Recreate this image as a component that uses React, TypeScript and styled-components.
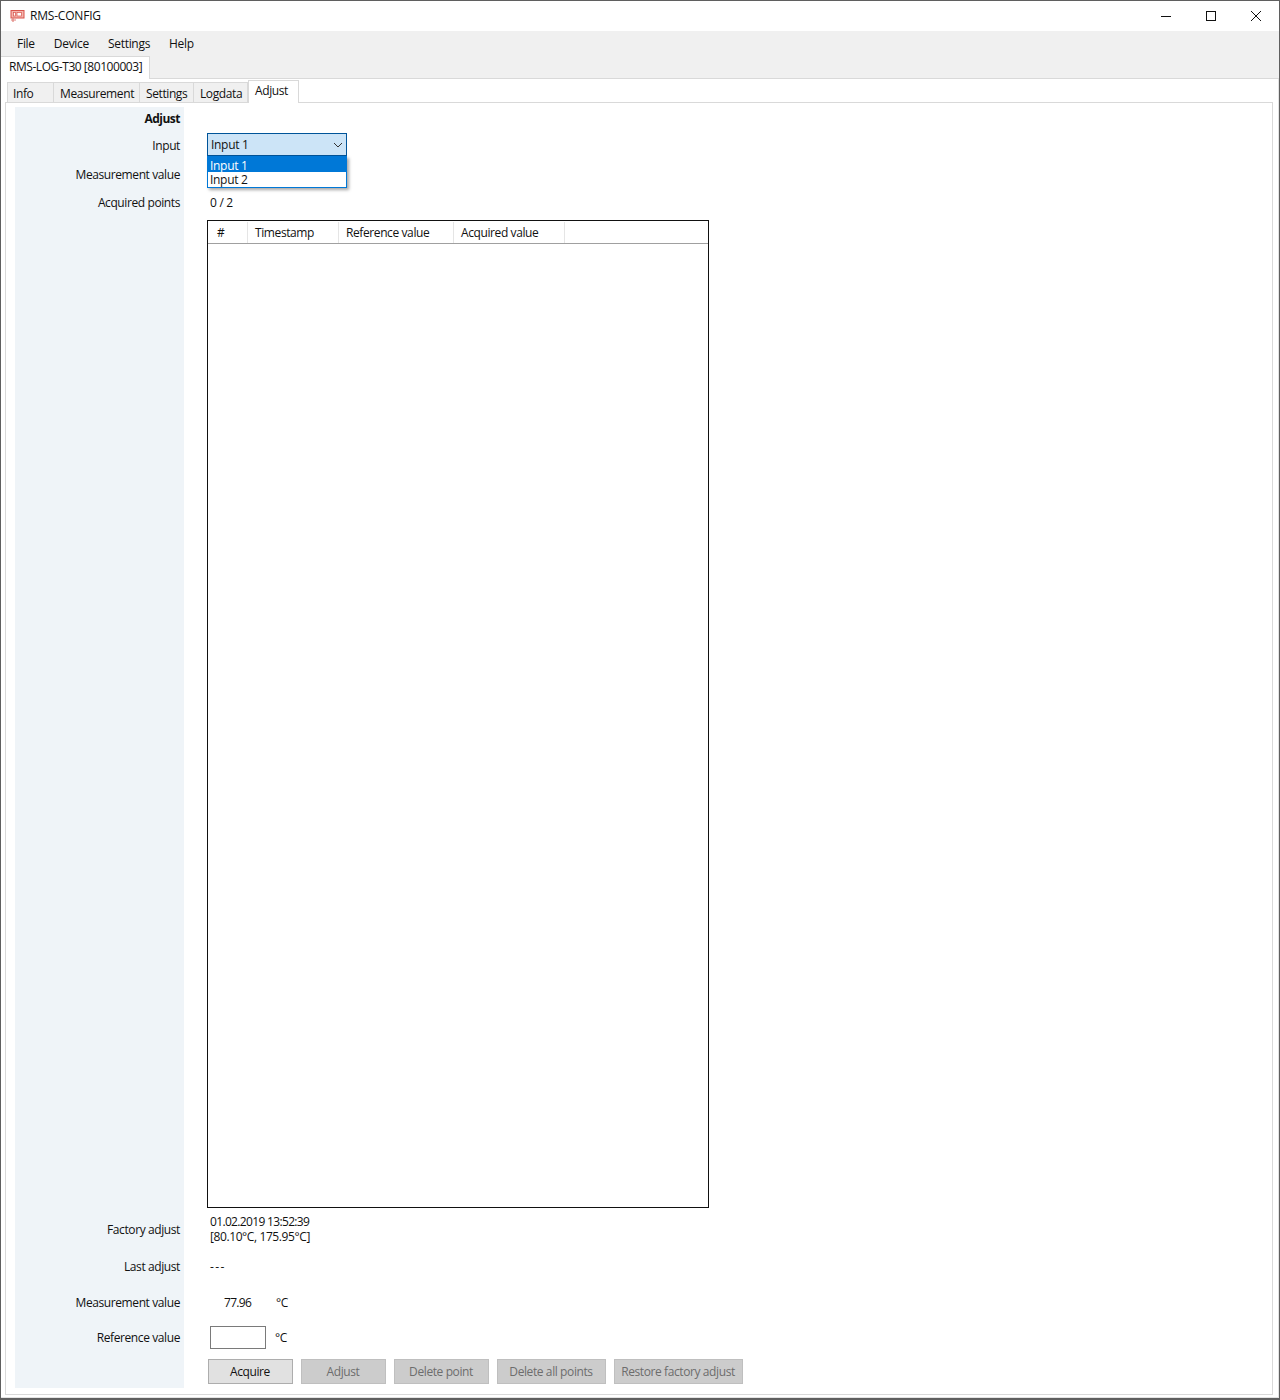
import React from "react";
import styled, { createGlobalStyle } from "styled-components";

const GlobalStyle = createGlobalStyle`
  html, body { margin: 0; padding: 0; background: #fff; }
  body { font-family: "Open Sans", "Noto Sans", "Liberation Sans", sans-serif; font-size: 12px; color: #111; }
`;

const Window = styled.div`
  width: 1280px;
  height: 1400px;
  box-sizing: border-box;
  border: 1px solid #5f5f5f;
  border-bottom-width: 2px;
  display: flex;
  flex-direction: column;
  background: #fff;
  overflow: hidden;
`;

const TitleBar = styled.div`
  height: 30px;
  flex: none;
  display: flex;
  align-items: center;
  padding-left: 9px;
`;

const AppTitle = styled.span`
  flex: 1;
  margin: -2px 0 0 5px;
  letter-spacing: -0.2px;
`;

const WinButton = styled.div<{ $wide?: boolean }>`
  width: ${(p) => (p.$wide ? 46 : 45)}px;
  height: 30px;
  display: flex;
  align-items: center;
  justify-content: center;
`;

const MenuBar = styled.div`
  height: 25px;
  flex: none;
  background: #f0f0f0;
  display: flex;
  align-items: center;
  padding-left: 16px;
  gap: 19px;
`;

const MenuItem = styled.span`
  letter-spacing: -0.3px;
`;

const DocStrip = styled.div`
  height: 22px;
  flex: none;
  background: #f0f0f0;
  border-bottom: 1px solid #d9d9d9;
  display: flex;
`;

const DocTab = styled.div`
  width: 149px;
  height: 23px;
  box-sizing: border-box;
  background: #fff;
  border: 1px solid #d9d9d9;
  border-bottom: none;
  border-left: none;
  padding-left: 8px;
  line-height: 20px;
  letter-spacing: -0.45px;
  white-space: nowrap;
`;

const DocPanel = styled.div`
  flex: 1;
  min-height: 0;
  display: flex;
  flex-direction: column;
  padding: 1px 5px 2px 4px;
  border-right: 1px solid #e3e3e3;
  border-bottom: 1px solid #e3e3e3;
`;

const TabStrip = styled.div`
  height: 22px;
  flex: none;
  display: flex;
  align-items: flex-end;
  padding-left: 2px;
`;

const Tab = styled.div<{ $width: number; $active?: boolean }>`
  width: ${(p) => p.$width}px;
  height: ${(p) => (p.$active ? 23 : 20)}px;
  box-sizing: border-box;
  padding: ${(p) => (p.$active ? "1px 0 0 6px" : "2px 0 0 6px")};
  line-height: 17px;
  letter-spacing: -0.4px;
  white-space: nowrap;
  background: ${(p) => (p.$active ? "#fff" : "#f0f0f0")};
  border: 1px solid #d9d9d9;
  border-left-width: ${(p) => (p.$active ? 1 : 0)}px;
  border-bottom: none;
  position: relative;
  z-index: ${(p) => (p.$active ? 1 : 0)};
  margin-bottom: ${(p) => (p.$active ? -1 : 0)}px;
  &:first-child {
    border-left-width: 1px;
    padding-left: 5px;
  }
`;

const TabPanel = styled.div`
  flex: 1;
  min-height: 0;
  border: 1px solid #d9d9d9;
  padding: 4px 0 6px 9px;
  display: flex;
`;

const Form = styled.div`
  flex: 1;
  display: grid;
  grid-template-columns: 169px 1fr;
  grid-template-rows: 22px 32px 27px 29px 994px 37px 37px 35px 34px 1fr;
`;

const Label = styled.div<{ $bold?: boolean }>`
  background: #eff4f8;
  display: flex;
  align-items: center;
  justify-content: flex-end;
  padding-right: 4px;
  font-weight: ${(p) => (p.$bold ? 700 : 400)};
  letter-spacing: ${(p) => (p.$bold ? "-0.5px" : "-0.4px")};
  white-space: nowrap;
`;

const Cell = styled.div`
  display: flex;
  align-items: center;
  padding-left: 26px;
  letter-spacing: -0.3px;
  position: relative;
`;

const ComboCell = styled(Cell)`
  padding: 4px 0 0 23px;
  align-items: flex-start;
`;

const Combo = styled.div`
  width: 140px;
  height: 23px;
  box-sizing: border-box;
  background: #cce4f7;
  border: 1px solid #005499;
  display: flex;
  align-items: center;
  justify-content: space-between;
  padding: 0 3px 0 3px;
`;

const DropList = styled.div`
  position: absolute;
  left: 23px;
  top: 27px;
  width: 140px;
  height: 32px;
  box-sizing: border-box;
  background: #fff;
  border: 1px solid #0078d7;
  box-shadow: 2px 2px 3px rgba(0, 0, 0, 0.35);
  z-index: 2;
`;

const DropItem = styled.div<{ $selected?: boolean }>`
  height: 15px;
  box-sizing: border-box;
  padding: ${(p) => (p.$selected ? "2px 0 0 2px" : "1px 0 0 2px")};
  line-height: 13px;
  background: ${(p) => (p.$selected ? "#0078d7" : "#fff")};
  color: ${(p) => (p.$selected ? "#fff" : "#111")};
`;

const TableCell = styled.div`
  padding: 3px 0 3px 23px;
  display: flex;
`;

const Table = styled.div`
  width: 502px;
  box-sizing: border-box;
  border: 1px solid #111;
  padding-top: 1px;
`;

const TableHead = styled.div`
  height: 22px;
  box-sizing: border-box;
  border-bottom: 1px solid #a0a0a0;
  display: flex;
`;

const HeadCol = styled.div<{ $width: number }>`
  width: ${(p) => p.$width}px;
  box-sizing: border-box;
  padding-left: 7px;
  line-height: 22px;
  border-right: 1px solid #e5e5e5;
  letter-spacing: -0.4px;
  white-space: nowrap;
  &:first-child {
    padding-left: 9px;
  }
`;

const TwoLines = styled.div`
  line-height: 15px;
  letter-spacing: -0.4px;
  margin-top: -2px;
`;

const DateLine = styled.span`
  letter-spacing: -0.66px;
`;

const Dashes = styled.span`
  letter-spacing: 1.4px;
`;

const Value = styled.span`
  width: 66px;
  padding-left: 14px;
  box-sizing: border-box;
  letter-spacing: -0.7px;
`;

const ValueInput = styled.input`
  width: 56px;
  height: 23px;
  box-sizing: border-box;
  border: 1px solid #7a7a7a;
  background: #fff;
  margin-right: 9px;
  padding: 0;
`;

const ButtonRow = styled.div`
  display: flex;
  gap: 8px;
  padding: 5px 0 0 24px;
  align-items: flex-start;
`;

const Button = styled.button<{ $width: number }>`
  width: ${(p) => p.$width}px;
  height: 25px;
  box-sizing: border-box;
  padding: 0 1px 0 0;
  font: inherit;
  letter-spacing: -0.4px;
  white-space: nowrap;
  color: ${(p) => (p.disabled ? "#6d6d6d" : "#111")};
  background: ${(p) => (p.disabled ? "#cccccc" : "#e1e1e1")};
  border: 1px solid ${(p) => (p.disabled ? "#bfbfbf" : "#adadad")};
`;

function AppIcon() {
  return (
    <svg width="15" height="14" viewBox="0 0 15 14" fill="none">
      <rect x="1" y="1.5" width="13" height="7.5" fill="#f3b5ae" stroke="#d9534a" />
      <rect x="3.5" y="3.5" width="2" height="3.5" fill="#fff" stroke="#d9534a" strokeWidth="0.7" />
      <rect x="7" y="3.5" width="4.5" height="3.5" fill="#fff" stroke="#d9534a" strokeWidth="0.7" />
      <path d="M1 11h5M3 9v4" stroke="#e0807a" strokeWidth="1.2" />
    </svg>
  );
}

const columns = [
  { label: "#", width: 40 },
  { label: "Timestamp", width: 91 },
  { label: "Reference value", width: 115 },
  { label: "Acquired value", width: 111 },
];

const tabs = [
  { label: "Info", width: 47 },
  { label: "Measurement", width: 86 },
  { label: "Settings", width: 54 },
  { label: "Logdata", width: 54 },
];

export default function App() {
  return (
    <Window>
      <GlobalStyle />
      <TitleBar>
        <AppIcon />
        <AppTitle>RMS-CONFIG</AppTitle>
        <WinButton>
          <svg width="10" height="10" viewBox="0 0 10 10">
            <path d="M0 5.5h10" stroke="#111" />
          </svg>
        </WinButton>
        <WinButton>
          <svg width="10" height="10" viewBox="0 0 10 10">
            <rect x="0.5" y="0.5" width="9" height="9" fill="none" stroke="#111" />
          </svg>
        </WinButton>
        <WinButton $wide>
          <svg width="10" height="10" viewBox="0 0 10 10">
            <path d="M0 0l10 10M10 0L0 10" stroke="#111" />
          </svg>
        </WinButton>
      </TitleBar>
      <MenuBar>
        <MenuItem>File</MenuItem>
        <MenuItem>Device</MenuItem>
        <MenuItem>Settings</MenuItem>
        <MenuItem>Help</MenuItem>
      </MenuBar>
      <DocStrip>
        <DocTab>RMS-LOG-T30 [80100003]</DocTab>
      </DocStrip>
      <DocPanel>
        <TabStrip>
          {tabs.map((t) => (
            <Tab key={t.label} $width={t.width}>
              {t.label}
            </Tab>
          ))}
          <Tab $width={51} $active>
            Adjust
          </Tab>
        </TabStrip>
        <TabPanel>
          <Form>
            <Label $bold>Adjust</Label>
            <Cell />
            <Label>Input</Label>
            <ComboCell>
              <Combo>
                Input 1
                <svg width="10" height="6" viewBox="0 0 10 6">
                  <path d="M1 1l4 4 4-4" fill="none" stroke="#333" />
                </svg>
              </Combo>
              <DropList>
                <DropItem $selected>Input 1</DropItem>
                <DropItem>Input 2</DropItem>
              </DropList>
            </ComboCell>
            <Label>Measurement value</Label>
            <Cell />
            <Label>Acquired points</Label>
            <Cell>0 / 2</Cell>
            <Label />
            <TableCell>
              <Table>
                <TableHead>
                  {columns.map((c) => (
                    <HeadCol key={c.label} $width={c.width}>
                      {c.label}
                    </HeadCol>
                  ))}
                </TableHead>
              </Table>
            </TableCell>
            <Label>Factory adjust</Label>
            <Cell>
              <TwoLines>
                <DateLine>01.02.2019 13:52:39</DateLine>
                <br />
                [80.10°C, 175.95°C]
              </TwoLines>
            </Cell>
            <Label>Last adjust</Label>
            <Cell>
              <Dashes>---</Dashes>
            </Cell>
            <Label>Measurement value</Label>
            <Cell>
              <Value>77.96</Value>°C
            </Cell>
            <Label>Reference value</Label>
            <Cell>
              <ValueInput />
              °C
            </Cell>
            <Label />
            <ButtonRow>
              <Button $width={85}>Acquire</Button>
              <Button $width={85} disabled>
                Adjust
              </Button>
              <Button $width={95} disabled>
                Delete point
              </Button>
              <Button $width={109} disabled>
                Delete all points
              </Button>
              <Button $width={129} disabled>
                Restore factory adjust
              </Button>
            </ButtonRow>
          </Form>
        </TabPanel>
      </DocPanel>
    </Window>
  );
}
